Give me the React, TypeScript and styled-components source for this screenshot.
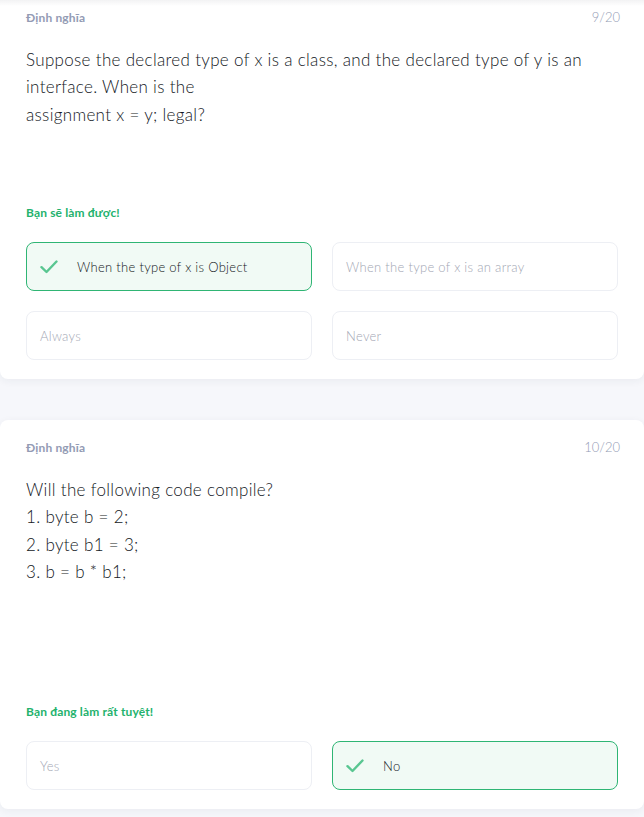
import React from "react";
import styled, { createGlobalStyle } from "styled-components";

const Global = createGlobalStyle`
  html, body { margin: 0; padding: 0; background: #f6f7fb; }
  body { font-family: Lato, "Noto Sans", "Open Sans", sans-serif; -webkit-font-smoothing: antialiased; }
  * { box-sizing: border-box; }
`;

const Page = styled.div`
  display: flex;
  flex-direction: column;
  gap: 41px;
  margin-top: -10px;
  padding-bottom: 40px;
`;

const TopShade = styled.div`
  position: fixed;
  top: 0;
  left: 0;
  right: 0;
  height: 6px;
  background: linear-gradient(rgba(40, 46, 62, 0.06), rgba(40, 46, 62, 0));
  pointer-events: none;
  z-index: 2;
`;

const Card = styled.section`
  background: #fff;
  border-radius: 8px;
  height: 389px;
  width: 644px;
  padding: 20px 26px 19px 26px;
  display: flex;
  flex-direction: column;
  box-shadow: 0 2px 8px rgba(40, 46, 62, 0.06);
`;

const Header = styled.div`
  display: flex;
  justify-content: space-between;
  align-items: center;
  height: 14px;
  margin-right: -2px;
`;

const Label = styled.span`
  font-size: 12px;
  font-weight: 700;
  color: #939bb4;
  letter-spacing: 0.15px;
`;

const Counter = styled.span`
  font-size: 13px;
  font-weight: 300;
  color: #939bb4;
`;

const Question = styled.div`
  flex: 1;
  margin-top: 22px;
  font-size: 17px;
  font-weight: 300;
  letter-spacing: 0.32px;
  line-height: 27.3px;
  color: #141824;
  padding-right: 10px;
`;

const Feedback = styled.div`
  font-size: 12px;
  font-weight: 700;
  line-height: 16px;
  letter-spacing: 0.15px;
  color: #23b26d;
  margin-bottom: 21px;
`;

const Options = styled.div`
  display: grid;
  grid-template-columns: 1fr 1fr;
  column-gap: 20px;
  row-gap: 20px;
`;

const Option = styled.div<{ $selected?: boolean }>`
  height: 49px;
  border-radius: 8px;
  border: ${(p) => (p.$selected ? "1.5px solid #2fb574" : "1.5px solid #edeff4")};
  background: ${(p) => (p.$selected ? "#f1faf5" : "#fff")};
  display: flex;
  align-items: center;
  padding-left: 13px;
  gap: 19px;
  font-size: 13px;
  font-weight: 300;
  letter-spacing: 0.3px;
  color: ${(p) => (p.$selected ? "#141824" : "#a3a7b4")};
`;

const Check = () => (
  <svg width="18" height="14" viewBox="0 0 18 14" fill="none">
    <path d="M1.5 7.2 L6.5 12 L16.5 1.5" stroke="#59c691" strokeWidth="2.4" strokeLinecap="round" strokeLinejoin="round" />
  </svg>
);

type Opt = { text: string; selected?: boolean };

const QuizCard = ({
  counter,
  question,
  feedback,
  options,
}: {
  counter: string;
  question: React.ReactNode;
  feedback: string;
  options: Opt[];
}) => (
  <Card>
    <Header>
      <Label>Định nghĩa</Label>
      <Counter>{counter}</Counter>
    </Header>
    <Question>{question}</Question>
    <Feedback>{feedback}</Feedback>
    <Options>
      {options.map((o) => (
        <Option key={o.text} $selected={o.selected}>
          {o.selected && <Check />}
          <span>{o.text}</span>
        </Option>
      ))}
    </Options>
  </Card>
);

export default function App() {
  return (
    <>
      <Global />
      <TopShade />
      <Page>
        <QuizCard
          counter="9/20"
          question={
            <>
              Suppose the declared type of x is a class, and the declared type of y is an interface. When is the
              <br />
              assignment x = y; legal?
            </>
          }
          feedback="Bạn sẽ làm được!"
          options={[
            { text: "When the type of x is Object", selected: true },
            { text: "When the type of x is an array" },
            { text: "Always" },
            { text: "Never" },
          ]}
        />
        <QuizCard
          counter="10/20"
          question={
            <>
              Will the following code compile?
              <br />
              1. byte b = 2;
              <br />
              2. byte b1 = 3;
              <br />
              3. b = b * b1;
            </>
          }
          feedback="Bạn đang làm rất tuyệt!"
          options={[{ text: "Yes" }, { text: "No", selected: true }]}
        />
      </Page>
    </>
  );
}
